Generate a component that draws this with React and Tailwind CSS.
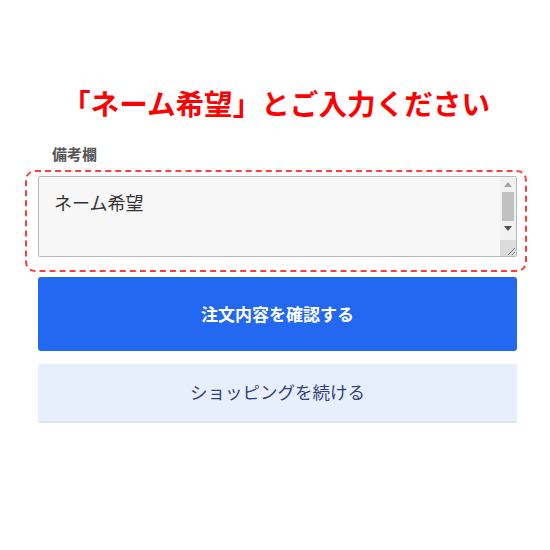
export default function App() {
  return (
    <div
      className="w-[550px] h-[550px] bg-white flex flex-col"
      style={{ fontFamily: '"Noto Sans CJK JP", "Noto Sans", sans-serif' }}
    >
      <h1 className="pt-[82px] text-center text-[28.6px] leading-[42px] font-bold text-[#ff0000] pl-[2px]">
        「ネーム希望」とご入力ください
      </h1>
      <div className="mt-[20px] pl-[52px] text-[15px] leading-[20px] font-bold text-[#555555]">
        備考欄
      </div>
      <div className="mt-[6px] ml-[25px] w-[502px] border-2 border-dashed border-[#ff3b3b] rounded-[10px] pl-[11px] pr-[8px] pt-[4px] pb-[13px]">
        <div className="flex w-[479px] h-[81px] bg-[#f7f7f7] border border-[#b8b8b8] rounded-[2px]">
          <textarea
            className="flex-1 h-full bg-transparent pl-[15px] pr-[4px] pt-[12px] text-[18px] leading-[26px] text-[#333333] overflow-hidden resize-none outline-none"
            defaultValue={"ネーム希望"}
          />
          <div className="w-[16px] flex flex-col bg-[#f1f1f1]">
            <div className="h-[15px] flex items-center justify-center">
              <svg width="8" height="5" viewBox="0 0 8 5">
                <path d="M0 5 L4 0 L8 5 Z" fill="#a3a3a3" />
              </svg>
            </div>
            <div className="h-[29px] mx-[2px] bg-[#c1c1c1]" />
            <div className="h-[15px] flex items-center justify-center">
              <svg width="8" height="5" viewBox="0 0 8 5">
                <path d="M0 0 L8 0 L4 5 Z" fill="#505050" />
              </svg>
            </div>
            <div className="flex-1" />
            <div className="h-[16px] bg-[#dcdcdc] flex items-end justify-end">
              <svg width="10" height="10" viewBox="0 0 10 10">
                <path d="M9 2 L2 9 M9 6 L6 9" stroke="#7a7a7a" strokeWidth="1" />
              </svg>
            </div>
          </div>
        </div>
      </div>
      <button className="mt-[5px] ml-[38px] w-[479px] h-[74px] bg-[#2368f0] rounded-[3px] text-white text-[17px] font-bold">
        注文内容を確認する
      </button>
      <button className="mt-[13px] ml-[38px] w-[479px] h-[59px] bg-[#e8effc] rounded-[2px] border-b-2 border-[#dbe4f5] text-[#2f3f80] text-[17.5px]">
        ショッピングを続ける
      </button>
    </div>
  );
}
